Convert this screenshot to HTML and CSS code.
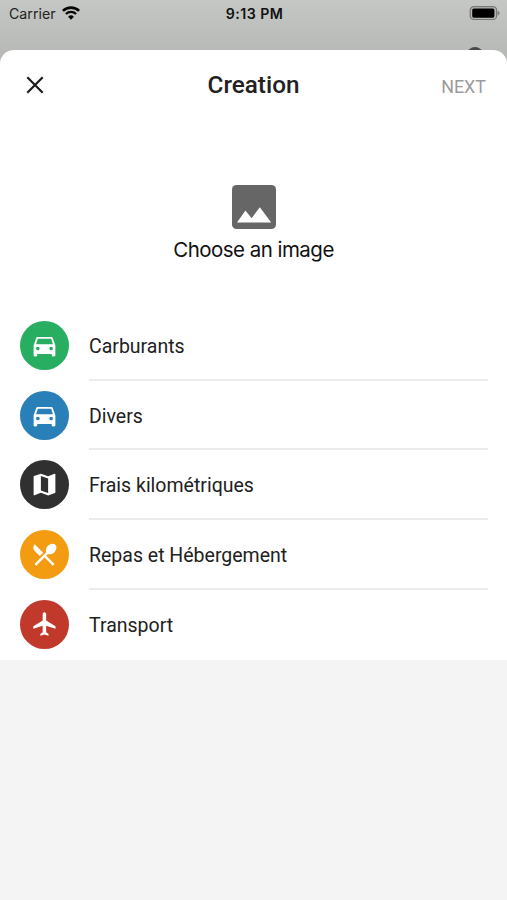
FILE: index.html
```html
<!DOCTYPE html>
<html lang="en">
<head>
<meta charset="utf-8">
<title>Creation</title>
<link rel="stylesheet" href="styles.css">
</head>
<body>
<div class="status">
  <div class="carrier"><span>Carrier</span>
    <svg class="wifi" width="18" height="14" viewBox="0 0 18 14" fill="none" stroke="#080808"><path d="M.9 4.9a11.6 11.6 0 0 1 16.2 0" stroke-width="2.6"/><path d="M3.9 8a7.3 7.3 0 0 1 10.2 0" stroke-width="2.3"/><path d="M9 13.7 6.1 10.8a4.1 4.1 0 0 1 5.8 0z" fill="#080808" stroke="none"/></svg>
  </div>
  <div class="time">9:13 PM</div>
  <svg class="battery" width="31" height="15" viewBox="0 0 31 15"><rect x="1.2" y=".7" width="26.4" height="12.8" rx="3.6" fill="#b4b6b3" stroke="#777976" stroke-width="1.2"/><rect x="3.2" y="2.5" width="22.2" height="9.2" rx="1.6"/><path d="M28.7 4.7c2.4.8 2.4 4 0 4.8z" fill="#777976"/></svg>
</div>
<div class="peek"></div>
<main class="sheet">
  <header class="bar">
    <svg class="close" width="18" height="18" viewBox="0 0 18 18" fill="none" stroke="#1c1c1c" stroke-width="2.2"><path d="M1.3 1.3 16.7 16.7M16.7 1.3 1.3 16.7"/></svg>
    <h1>Creation</h1>
    <span class="next">NEXT</span>
  </header>
  <section class="picker">
    <svg width="44" height="44" viewBox="0 0 44 44"><rect width="44" height="44" rx="4.5" fill="#666"/><path d="M5 37.4 13.4 25.5 19.7 33.2 27.8 22.2 39.2 37.4z" fill="#fff"/></svg>
    <span>Choose an image</span>
  </section>
  <ul class="list">
    <li><i class="dot green"><svg viewBox="0 0 24 24"><path d="M18.92 6.01C18.72 5.42 18.16 5 17.5 5h-11c-.66 0-1.21.42-1.42 1.01L3 12v8c0 .55.45 1 1 1h1c.55 0 1-.45 1-1v-1h12v1c0 .55.45 1 1 1h1c.55 0 1-.45 1-1v-8l-2.08-5.99zM6.5 16c-.83 0-1.5-.67-1.5-1.5S5.67 13 6.5 13s1.5.67 1.5 1.5S7.33 16 6.5 16zm11 0c-.83 0-1.5-.67-1.5-1.5s.67-1.5 1.5-1.5 1.5.67 1.5 1.5-.67 1.5-1.5 1.5zM5 11l1.5-4.5h11L19 11H5z"/></svg></i><span class="label">Carburants</span></li>
    <li><i class="dot blue"><svg viewBox="0 0 24 24"><path d="M18.92 6.01C18.72 5.42 18.16 5 17.5 5h-11c-.66 0-1.21.42-1.42 1.01L3 12v8c0 .55.45 1 1 1h1c.55 0 1-.45 1-1v-1h12v1c0 .55.45 1 1 1h1c.55 0 1-.45 1-1v-8l-2.08-5.99zM6.5 16c-.83 0-1.5-.67-1.5-1.5S5.67 13 6.5 13s1.5.67 1.5 1.5S7.33 16 6.5 16zm11 0c-.83 0-1.5-.67-1.5-1.5s.67-1.5 1.5-1.5 1.5.67 1.5 1.5-.67 1.5-1.5 1.5zM5 11l1.5-4.5h11L19 11H5z"/></svg></i><span class="label">Divers</span></li>
    <li><i class="dot dark"><svg viewBox="0 0 24 24"><path d="M20.5 3l-.16.03L15 5.1 9 3 3.36 4.9c-.21.07-.36.25-.36.48V20.5c0 .28.22.5.5.5l.16-.03L9 18.9l6 2.1 5.64-1.9c.21-.07.36-.25.36-.48V3.5c0-.28-.22-.5-.5-.5zM15 19l-6-2.11V5l6 2.11V19z"/></svg></i><span class="label">Frais kilométriques</span></li>
    <li><i class="dot orange"><svg viewBox="0 0 24 24"><path d="M8.1 13.34l2.83-2.83L3.91 3.5c-1.56 1.56-1.56 4.09 0 5.66l4.19 4.18zm6.78-1.81c1.53.71 3.68.21 5.27-1.38 1.91-1.91 2.28-4.65.81-6.12-1.46-1.46-4.2-1.1-6.12.81-1.59 1.59-2.09 3.74-1.38 5.27L3.7 19.87l1.41 1.41L12 14.41l6.88 6.88 1.41-1.41L13.41 13l1.47-1.47z"/></svg></i><span class="label">Repas et Hébergement</span></li>
    <li><i class="dot red"><svg viewBox="0 0 24 24"><path d="M21 16v-2l-8-5V3.5c0-.83-.67-1.5-1.5-1.5S10 2.67 10 3.5V9l-8 5v2l8-2.5V19l-2 1.5V22l3.5-1 3.5 1v-1.5L13 19v-5.5l8 2.5z"/></svg></i><span class="label">Transport</span></li>
  </ul>
</main>
</body>
</html>
```

FILE: styles.css
```css
* { box-sizing: border-box; }
body {
  margin: 0;
  height: 900px;
  overflow: hidden;
  position: relative;
  background: #f4f4f4 linear-gradient(#c5c7c4, #b8bab7 50px, #b8bab7 80px) no-repeat 0 0 / 100% 80px;
  font-family: Roboto, "Liberation Sans", sans-serif;
  color: #212121;
}
.status {
  height: 50px;
  padding: 6px 7px 0 9px;
  display: grid;
  grid-template-columns: 1fr auto 1fr;
  align-items: start;
  font: 14.2px/16px Inter, sans-serif;
  color: #222;
}
.carrier { display: flex; gap: 6px; }
.time { font-weight: 600; font-size: 14.2px; letter-spacing: .45px; color: #111; }
.battery { justify-self: end; }
.peek {
  position: absolute;
  left: 467px;
  top: 47px;
  width: 16px;
  height: 16px;
  border-radius: 50%;
  background: #484948;
}
.sheet {
  position: relative;
  height: 610px;
  background: #fff;
  border-radius: 14px 14px 0 0;
}
.bar {
  height: 69px;
  padding: 0 21px 0 26px;
  display: grid;
  grid-template-columns: 1fr auto 1fr;
  align-items: center;
}
h1 { margin: 0 5px 0 0; font-size: 24.3px; line-height: 30px; font-weight: 500; }
.next { justify-self: end; margin-top: 4px; font-size: 17.9px; color: #9b9b9b; }
.picker {
  height: 192px;
  padding-top: 66px;
  display: flex;
  flex-direction: column;
  align-items: center;
  font: 20.5px/26px Inter, sans-serif;
  letter-spacing: -.53px;
  color: #111;
}
.picker span { margin-top: 8px; }
.list { list-style: none; margin: 0; padding: 0 19px 0 20.4px; }
.list li { height: 69.7px; display: flex; gap: 19.6px; }
.dot {
  width: 49px;
  height: 49px;
  margin-top: 10px;
  border-radius: 50%;
  display: grid;
  place-items: center;
}
.dot svg { width: 29px; height: 29px; fill: #fff; }
.red svg { width: 28px; height: 28px; }
.green { background: #27ae60; }
.blue { background: #2980b9; }
.dark { background: #303030; }
.orange { background: #f39c12; }
.red { background: #c0392b; }
.label {
  flex: 1;
  font-size: 19.5px;
  line-height: 71px;
  border-bottom: 2px solid #ececec;
}
li:last-child .label { border-bottom: 0; }
```
